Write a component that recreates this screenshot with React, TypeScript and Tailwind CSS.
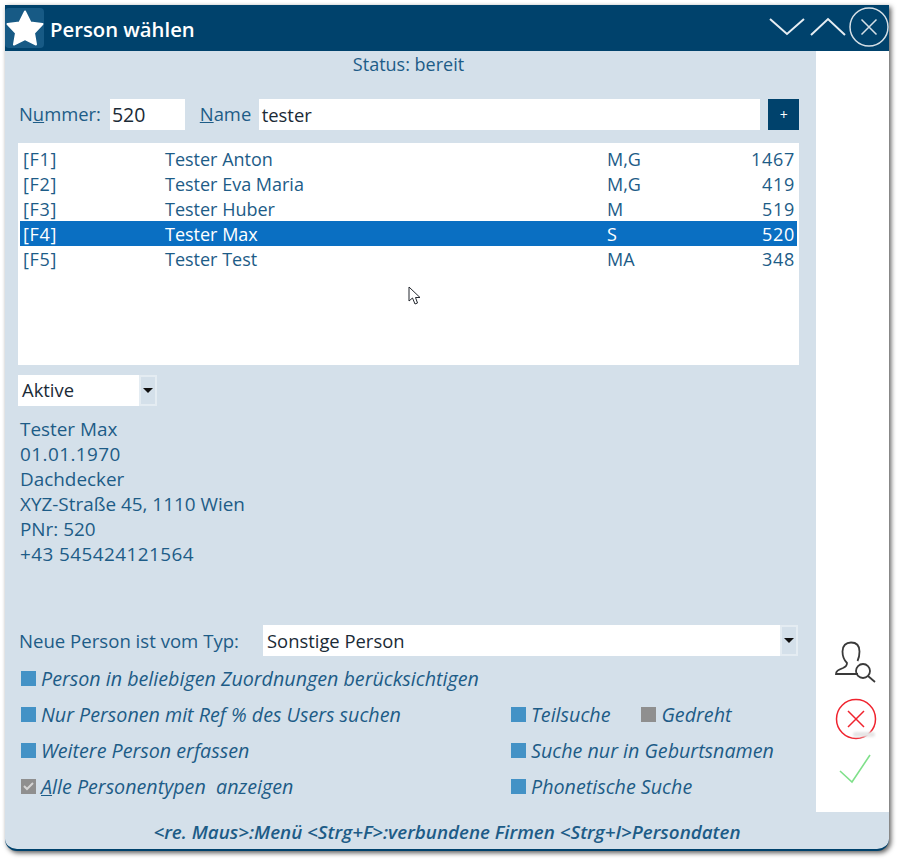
const persons = [
  { key: '[F1]', name: 'Tester Anton', type: 'M,G', nr: '1467' },
  { key: '[F2]', name: 'Tester Eva Maria', type: 'M,G', nr: '419' },
  { key: '[F3]', name: 'Tester Huber', type: 'M', nr: '519' },
  { key: '[F4]', name: 'Tester Max', type: 'S', nr: '520', selected: true },
  { key: '[F5]', name: 'Tester Test', type: 'MA', nr: '348' },
];

const details = [
  { text: 'Tester Max' },
  { text: '01.01.1970', digits: true },
  { text: 'Dachdecker' },
  { text: 'XYZ-Straße 45, 1110 Wien' },
  { text: 'PNr: 520' },
  { text: '+43 545424121564', digits: true },
];

function Box({ gray }: { gray?: boolean }) {
  return <span className={`h-[15px] w-[15px] flex-shrink-0 ${gray ? 'bg-[#8f8f8f]' : 'bg-[#4392c6]'}`} />;
}

function Option({ label, gray }: { label: string; gray?: boolean }) {
  return (
    <div className="flex h-[22px] items-center gap-[5px]">
      <Box gray={gray} />
      <span className="text-[19.7px] italic">{label}</span>
    </div>
  );
}

function DropArrow() {
  return (
    <span className="flex h-full w-[18px] items-center justify-center border-2 border-[#e4ecf2] bg-[#d4e0ea]">
      <svg width="10" height="5" viewBox="0 0 10 5">
        <path d="M0 0H10L5 5Z" fill="#111" />
      </svg>
    </span>
  );
}

export default function App() {
  return (
    <div className="h-[860px] w-[898px] bg-white pl-[5px] pt-[5px] font-['Open_Sans',sans-serif] text-[18.4px] leading-[25px] text-[#1d5c87]">
      <div className="w-[884px] overflow-hidden rounded-b-[12px] border-b-2 border-[#00426c] bg-[#d4e0ea] shadow-[2px_2px_5px_rgba(0,0,0,0.65)]">
        <div className="flex h-[46px] items-center bg-[#00426c]">
          <div className="flex h-[40px] w-[39px] items-center justify-center rounded-[4px] bg-[#175a85]">
            <svg width="38" height="36" viewBox="0 0 38 36">
              <path d="M19 1.500L24.500 12.500L36.500 14L28 23L30 34.500L19 29L8 34.500L10 23L1.500 14L13.500 12.500Z" fill="#fff" strokeLinejoin="round" strokeWidth="2" stroke="#fff" />
            </svg>
          </div>
          <span className="ml-[6px] pt-[3px] text-[20.3px] font-semibold text-white">Person wählen</span>
          <div className="ml-auto flex items-center">
            <svg className="mb-[3px]" width="36" height="20" viewBox="0 0 36 20" fill="none" stroke="#e6edf2" strokeWidth="2">
              <path d="M1 2L18 17L35 2" />
            </svg>
            <svg className="mb-[3px] ml-[5px]" width="36" height="20" viewBox="0 0 36 20" fill="none" stroke="#e6edf2" strokeWidth="2">
              <path d="M1 18L18 2L35 18" />
            </svg>
            <svg className="mb-[2px] ml-[3px]" width="40" height="40" viewBox="0 0 40 40" fill="none" stroke="#d5dfe6" strokeWidth="1.500">
              <circle cx="20" cy="20" r="19" />
              <path d="M12.500 12.500L27.500 27.500M27.500 12.500L12.500 27.500" />
            </svg>
          </div>
        </div>

        <div className="flex h-[761px]">
          <div className="relative w-[811px] pl-[13px] pr-[17px]">
            <div className="h-[25px] pt-px text-center text-[18px]">Status: bereit</div>

            <div className="mt-[23px] flex h-[31px] items-center">
              <label className="w-[92px] pb-[2px] pl-px">
                N<u>u</u>mmer:
              </label>
              <div className="h-full w-[75px] bg-white pl-[2px] text-[19.500px] leading-[31px] text-[#1a2a36]">520</div>
              <label className="ml-[15px] w-[59px] pb-[3px]">
                <u>N</u>ame
              </label>
              <div className="h-full w-[502px] bg-white pl-[3px] text-[18.400px] leading-[31px] text-[#1a2a36]">tester</div>
              <button className="ml-[8px] flex h-[31px] w-[31px] items-center justify-center bg-[#00426c] text-[14px] italic text-white">
                +
              </button>
            </div>

            <div className="mt-[13px] h-[222px] w-[781px] bg-white px-[2px] py-[3px] text-[18px]">
              {persons.map(p => (
                <div
                  key={p.key}
                  className={`flex h-[25px] items-center pl-[3px] pr-[2px] pt-[1px] ${p.selected ? 'bg-[#0a6fc2] text-white' : ''}`}
                >
                  <span className="w-[142px] tracking-[0.7px]">{p.key}</span>
                  <span className="w-[442px]">{p.name}</span>
                  <span className="w-[100px]">{p.type}</span>
                  <span className="flex-1 text-right tracking-[0.7px]">{p.nr}</span>
                </div>
              ))}
            </div>

            <div className="mt-[10px] flex h-[31px] w-[139px] items-center bg-white pl-[4px] text-[#1a2a36]">
              <span className="flex-1 pb-[3px]">Aktive</span>
              <DropArrow />
            </div>

            <div className="mt-[11px] pl-[2px] text-[18.900px]">
              {details.map(line => (
                <div key={line.text} className={line.digits ? 'tracking-[0.45px]' : ''}>
                  {line.text}
                </div>
              ))}
            </div>

            <div className="mt-[58px] flex h-[31px] items-center">
              <span className="w-[245px] pl-px text-[18.600px]">Neue Person ist vom Typ:</span>
              <div className="flex h-full w-[535px] items-center bg-white pl-[4px] text-[#1a2a36]">
                <span className="flex-1">Sonstige Person</span>
                <DropArrow />
              </div>
            </div>

            <div className="mt-[11px] pl-[3px]">
              <Option label="Person in beliebigen Zuordnungen berücksichtigen" />
            </div>
            <div className="mt-[14px] grid grid-cols-[490px_1fr] gap-y-[14px] pl-[3px]">
              <Option label="Nur Personen mit Ref % des Users suchen" />
              <div className="flex gap-[31px]">
                <Option label="Teilsuche" />
                <Option label="Gedreht" gray />
              </div>
              <Option label="Weitere Person erfassen" />
              <Option label="Suche nur in Geburtsnamen" />
              <div className="flex h-[22px] items-center gap-[5px]">
                <span className="flex h-[15px] w-[15px] flex-shrink-0 items-center justify-center bg-[#8f8f8f]">
                  <svg width="11" height="9" viewBox="0 0 11 9" fill="none" stroke="#d5d5d5" strokeWidth="2">
                    <path d="M1 4L4 7L10 1" />
                  </svg>
                </span>
                <span className="text-[19.700px] italic">
                  <u>A</u>lle Personentypen&nbsp; anzeigen
                </span>
              </div>
              <Option label="Phonetische Suche" />
            </div>

            {/* mouse pointer */}
            <svg className="absolute left-[403px] top-[235px]" width="13" height="20" viewBox="0 0 13 20">
              <path d="M1 1V15L4.500 12L7 18L9.500 17L7.500 11.500H12Z" fill="#fff" stroke="#23272e" strokeWidth="1" />
            </svg>
          </div>

          <div className="flex w-[73px] flex-col items-center bg-white pt-[590px]">
            <svg className="ml-[5px]" width="42" height="42" viewBox="0 0 42 42" fill="none" stroke="#3a3a3a" strokeWidth="1.800">
              <path d="M24 33H2C2 30 4 29 9 27C12.500 25.500 13 24 13 22C10 19 8.500 15 8.500 10.500C8.500 4.500 12 1.500 17 1.500C22 1.500 25.500 4.500 25.500 10.500C25.500 14 25 17 23.500 20" />
              <circle cx="29" cy="30" r="7" />
              <path d="M34 35L41 41" />
            </svg>
            <div className="relative ml-[7px] mt-[15px] h-[42px] w-[42px]">
              <svg width="42" height="42" viewBox="0 0 42 42" fill="none" stroke="#f0232e" strokeWidth="1.500">
                <circle cx="21" cy="21" r="19.500" />
                <path d="M13 13L29 29M29 13L13 29" />
              </svg>
              <span className="absolute left-[18px] top-[34px] h-[5px] w-[22px] rounded-full bg-[#e6e6e6] blur-[1px]" />
            </div>
            <svg className="ml-[4px] mt-[14px]" width="32" height="30" viewBox="0 0 32 30" fill="none" stroke="#7fe08a" strokeWidth="1.600">
              <path d="M1 17L13 28L31 1" />
            </svg>
          </div>
        </div>

        <div className="flex h-[37px] items-center justify-center pt-[3px] text-[18.800px] font-semibold italic">
          &lt;re. Maus&gt;:Menü &lt;Strg+F&gt;:verbundene Firmen &lt;Strg+I&gt;Persondaten
        </div>
      </div>
    </div>
  );
}
